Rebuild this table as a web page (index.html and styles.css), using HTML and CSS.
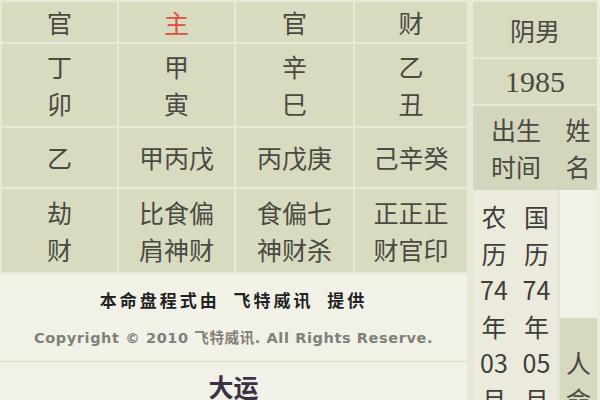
FILE: index.html
```html
<!DOCTYPE html>
<html lang="zh-CN">
<head>
<meta charset="utf-8">
<title>命盘</title>
<link rel="stylesheet" href="styles.css">
</head>
<body>
<div class="page">
  <div class="left">
    <div class="pillars">
      <div class="cell">官</div>
      <div class="cell main">主</div>
      <div class="cell">官</div>
      <div class="cell">财</div>

      <div class="cell">丁<br>卯</div>
      <div class="cell">甲<br>寅</div>
      <div class="cell">辛<br>巳</div>
      <div class="cell">乙<br>丑</div>

      <div class="cell">乙</div>
      <div class="cell">甲丙戊</div>
      <div class="cell">丙戊庚</div>
      <div class="cell">己辛癸</div>

      <div class="cell">劫<br>财</div>
      <div class="cell">比食偏<br>肩神财</div>
      <div class="cell">食偏七<br>神财杀</div>
      <div class="cell">正正正<br>财官印</div>
    </div>
    <div class="credit">
      <p class="provider">本命盘程式由&nbsp;&nbsp;飞特威讯&nbsp;&nbsp;提供</p>
      <p class="copyright">Copyright © 2010 飞特威讯. All Rights Reserve.</p>
    </div>
    <div class="dayun">大运</div>
  </div>
  <div class="right">
    <div class="rcell gender">阴男</div>
    <div class="rcell year">1985</div>
    <div class="birth">
      <div class="birth-time">出生<br>时间</div>
      <div class="birth-name">姓<br>名</div>
    </div>
    <div class="dates">
      <div class="date lunar">农<br>历<br>74<br>年<br>03<br>月</div>
      <div class="date solar">国<br>历<br>74<br>年<br>05<br>月</div>
      <div class="name-col">
        <div class="blank"></div>
        <div class="renming">人<br>命</div>
      </div>
    </div>
  </div>
</div>
</body>
</html>
```

FILE: styles.css
```css
html, body {
  margin: 0;
  padding: 0;
}

body {
  width: 600px;
  height: 400px;
  overflow: hidden;
  background: #f1f1e7;
  font-family: "Noto Sans CJK SC", "Noto Sans", sans-serif;
}

.page {
  display: flex;
  width: 600px;
  height: 400px;
  overflow: hidden;
}

.left {
  width: 467px;
  flex: none;
  display: flex;
  flex-direction: column;
  background: #f1f1e7;
}

.pillars {
  flex: none;
  display: grid;
  grid-template-columns: 115px 115px 117px 112px;
  grid-template-rows: 40px 82px 59px 83px;
  gap: 2px;
  padding: 2px 0 2px 2px;
  background: #e7e9d8;
}

.cell {
  background: #d8dbc0;
  display: flex;
  align-items: center;
  justify-content: center;
  text-align: center;
  font-size: 25px;
  line-height: 37px;
  color: #4a4a42;
}

.cell.main {
  color: #d9503f;
}

.credit {
  flex: none;
  height: 87px;
  border-bottom: 1px solid #dadacd;
  display: flex;
  flex-direction: column;
  align-items: center;
}

.provider {
  margin: 14px 0 0;
  font-size: 17px;
  line-height: 24px;
  font-weight: bold;
  letter-spacing: 3px;
  color: #222;
  white-space: nowrap;
}

.copyright {
  margin: 16px 0 0;
  font-family: "DejaVu Sans", "Noto Sans CJK SC", sans-serif;
  font-size: 14.5px;
  letter-spacing: 0.6px;
  font-weight: bold;
  line-height: 20px;
  color: #808079;
  white-space: nowrap;
}

.dayun {
  flex: none;
  padding-top: 9px;
  text-align: center;
  font-size: 25px;
  line-height: 30px;
  font-weight: bold;
  color: #3b3147;
}

.right {
  width: 124px;
  height: 400px;
  flex: none;
  border-left: 6px solid #e7e9d8;
  border-right: 3px solid #ecedde;
  background: #e7e9d8;
  display: flex;
  flex-direction: column;
  gap: 2px;
  padding-top: 2px;
  box-sizing: border-box;
  width: 133px;
  overflow: hidden;
}

.rcell {
  flex: none;
  background: #d8dbc0;
  display: flex;
  align-items: center;
  justify-content: center;
  color: #4a4a42;
}

.gender {
  height: 55px;
  font-size: 25px;
}

.year {
  height: 45px;
  font-family: "Liberation Serif", serif;
  font-size: 30px;
}

.birth {
  flex: none;
  height: 84px;
  display: flex;
  background: #d3d6bc;
  font-size: 25px;
  line-height: 37px;
  color: #4a4a42;
}

.birth-time {
  width: 86px;
  display: flex;
  align-items: center;
  justify-content: center;
  text-align: center;
}

.birth-name {
  width: 38px;
  display: flex;
  align-items: center;
  justify-content: center;
  text-align: center;
}

.dates {
  flex: 1;
  min-height: 0;
  display: flex;
  margin-top: -2px;
  overflow: hidden;
}

.date {
  background: #ebeadc;
  font-size: 25px;
  line-height: 36.5px;
  text-align: center;
  color: #3e3e3a;
  padding-top: 8px;
}

.lunar {
  width: 42px;
}

.solar {
  width: 43px;
  border-right: 2px solid #e4e5d6;
}

.name-col {
  flex: 1;
  display: flex;
  flex-direction: column;
}

.blank {
  flex: none;
  height: 128px;
  background: #f1f1e8;
}

.renming {
  flex: 1;
  background: #d6d9bf;
  font-size: 25px;
  line-height: 37px;
  text-align: center;
  color: #4a4a42;
  padding-top: 26px;
}
```
